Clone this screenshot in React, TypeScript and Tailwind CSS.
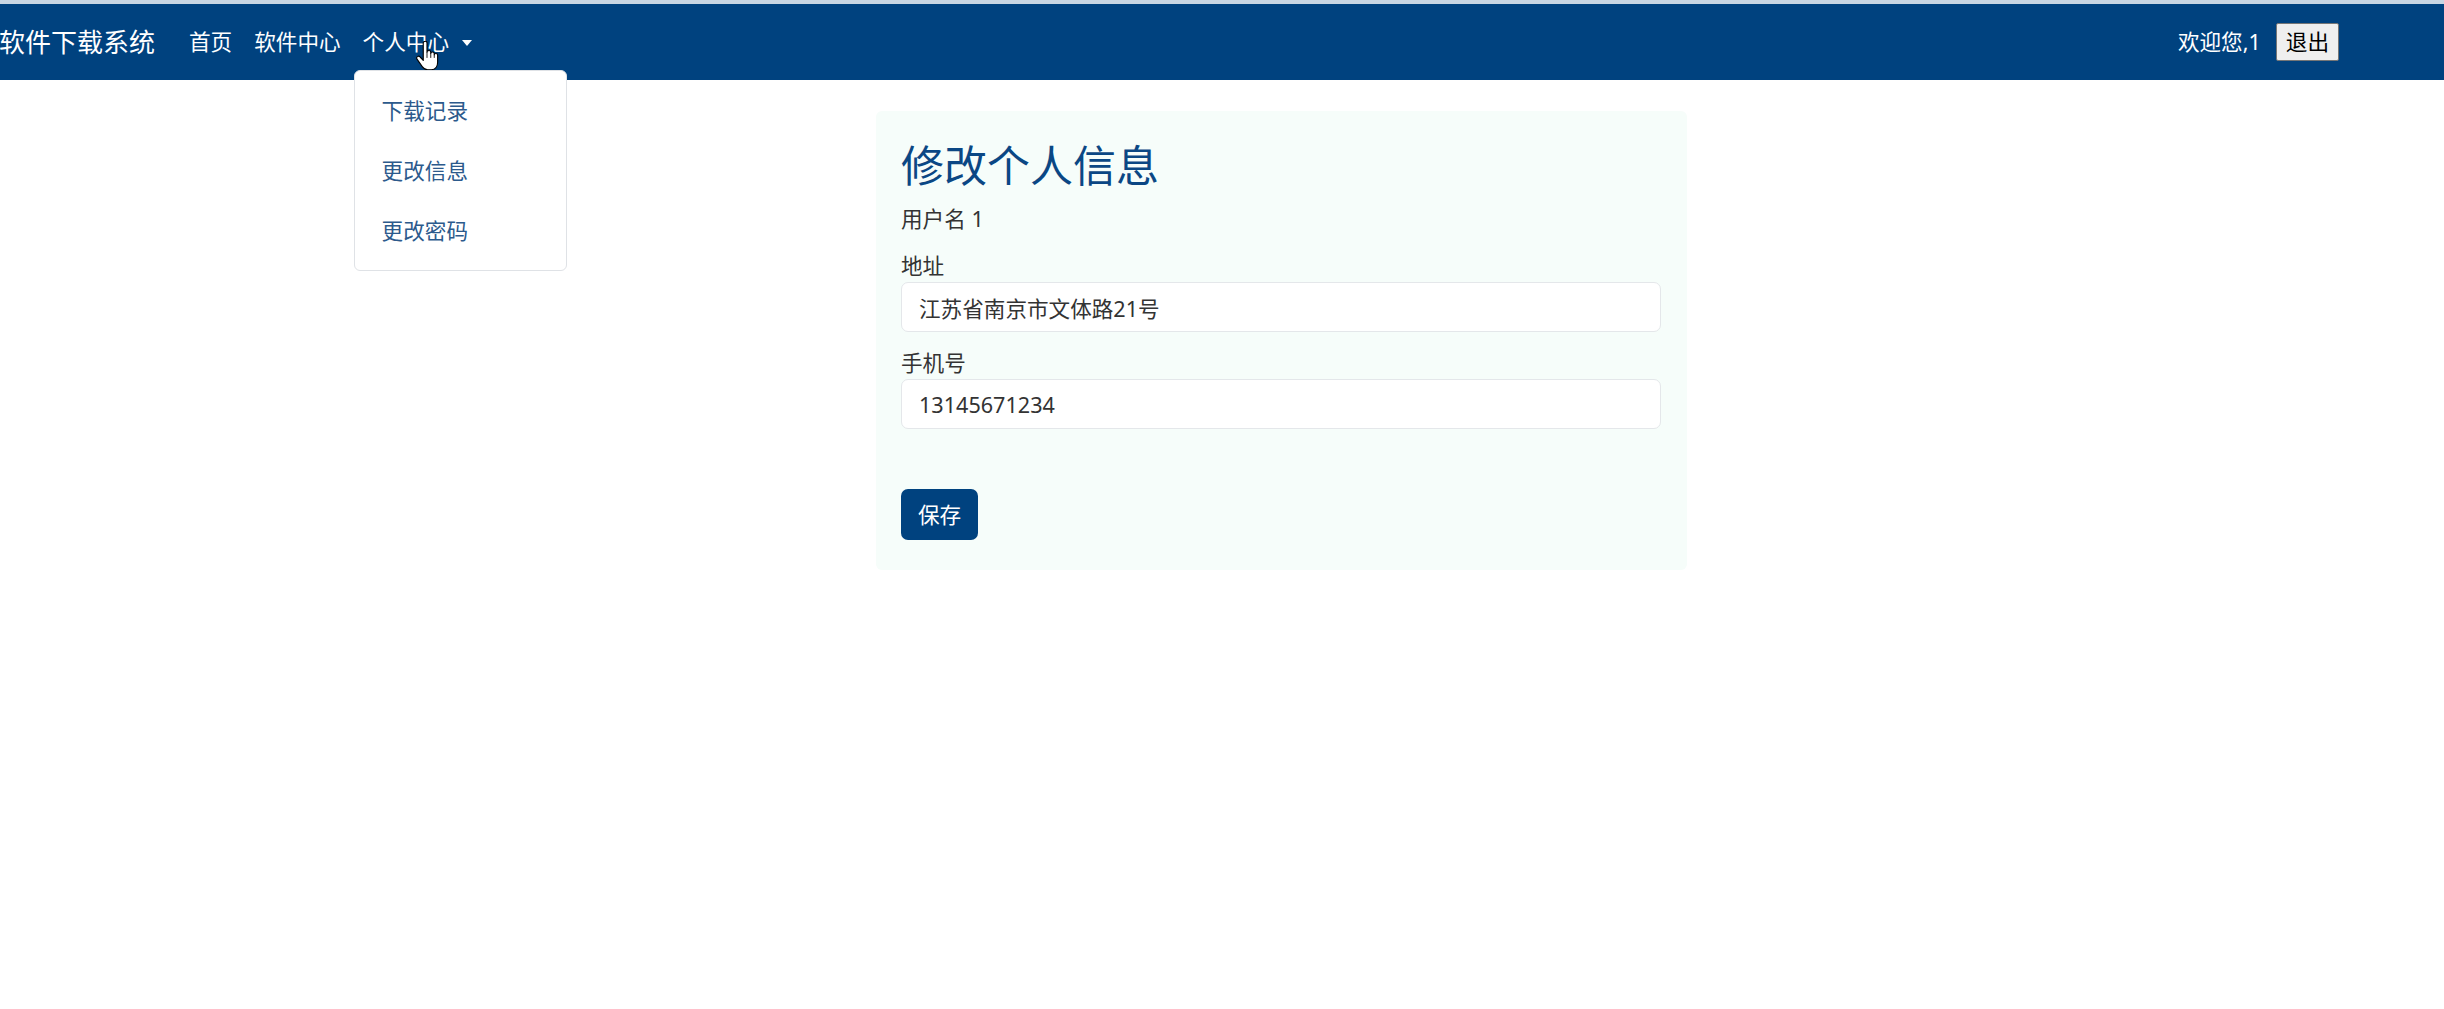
import { useState } from "react";

const font = "font-['Noto_Sans','Noto_Sans_CJK_SC',sans-serif]";

const menuItems = ["下载记录", "更改信息", "更改密码"];

const HandCursor = () => (
  <svg
    className="absolute left-[413px] top-[41px] pointer-events-none"
    width="28"
    height="30"
    viewBox="0 0 20 24"
  >
    <path
      d="M7 1.6C7 0.8 7.6 0.2 8.5 0.2C9.4 0.2 10 0.8 10 1.6V9C10 8.2 10.6 7.6 11.5 7.6C12.4 7.6 13 8.2 13 9V10C13 9.3 13.6 8.8 14.4 8.8C15.2 8.8 15.8 9.4 15.8 10.2V11C15.8 10.5 16.4 10 17.1 10C17.9 10 18.5 10.6 18.5 11.4V17C18.5 20.5 16.5 23 13.5 23H10.5C8.5 23 7.3 22 6.2 20.5L2 14.5C1.5 13.8 1.7 12.9 2.4 12.5C3.1 12 4 12.2 4.5 12.8L7 15.5Z"
      fill="#fff"
      stroke="#000"
      strokeWidth="0.9"
      strokeLinejoin="round"
    />
    <path d="M10 9V13.5M13 10V13.5M15.8 11V13.5" stroke="#000" strokeWidth="0.7" />
  </svg>
);

export default function App() {
  const [address, setAddress] = useState("江苏省南京市文体路21号");
  const [phone, setPhone] = useState("13145671234");

  return (
    <div className={`relative min-h-[1009px] bg-white ${font}`}>
      <div className="h-[4px] bg-[#c9d6e3]" />

      {/* Navbar */}
      <nav className="flex h-[76px] items-stretch bg-[#00427f] pr-[105px] text-white">
        <a className="ml-[-1px] mr-[23px] flex items-center text-[26px] leading-none text-white">
          软件下载系统
        </a>
        <ul className="flex items-stretch text-[21.6px] leading-[32px]">
          <li className="flex items-center">
            <a className="px-[11px] text-white">首页</a>
          </li>
          <li className="flex items-center">
            <a className="px-[11px] text-white">软件中心</a>
          </li>
          <li className="relative flex items-center">
            <a className="flex items-center px-[11px] text-white">
              个人中心
              <span className="ml-[13px] mt-[2px] h-0 w-0 border-x-[5px] border-t-[6px] border-x-transparent border-t-white" />
            </a>
            <div className="absolute left-[2px] top-[66px] z-10 w-[213px] rounded-[6px] border border-[#dfe2e6] bg-white pt-[10px] pb-[9px]">
              {menuItems.map((item) => (
                <a
                  key={item}
                  className="flex h-[60px] items-center pl-[27px] text-[21.6px] text-[#2c5a8c]"
                >
                  {item}
                </a>
              ))}
            </div>
          </li>
        </ul>
        <div className="ml-auto flex items-center gap-[15px] text-[21.6px]">
          <span className="text-white">欢迎您,1</span>
          <button className="h-[38px] rounded-[2px] border border-[#767676] bg-[#efefef] px-[9px] text-[21.6px] leading-none text-black">
            退出
          </button>
        </div>
      </nav>

      {/* Form card */}
      <div className="ml-[876px] mt-[31px] w-[811px] rounded-[6px] bg-[#f6fdfa] px-[25px] pt-[29px] pb-[30px] text-[21.6px] leading-[32px] text-[#333]">
        <h2 className="mb-[11px] text-[43px] leading-[52px] text-[#0b4784]">修改个人信息</h2>
        <p className="mb-[15px]">用户名 1</p>
        <label className="block">地址</label>
        <input
          value={address}
          onChange={(e) => setAddress(e.target.value)}
          className="block h-[50px] w-[760px] rounded-[7px] border border-[#e4e7ea] bg-white px-[17px] text-[21.6px] text-[#333] outline-none"
        />
        <label className="mt-[15px] block">手机号</label>
        <input
          value={phone}
          onChange={(e) => setPhone(e.target.value)}
          className="block h-[50px] w-[760px] rounded-[7px] border border-[#e4e7ea] bg-white px-[17px] text-[21.6px] text-[#333] outline-none"
        />
        <button className="mt-[60px] h-[51px] rounded-[7px] bg-[#00427f] px-[17px] text-[21.6px] leading-none text-white">
          保存
        </button>
      </div>

      <HandCursor />
    </div>
  );
}
